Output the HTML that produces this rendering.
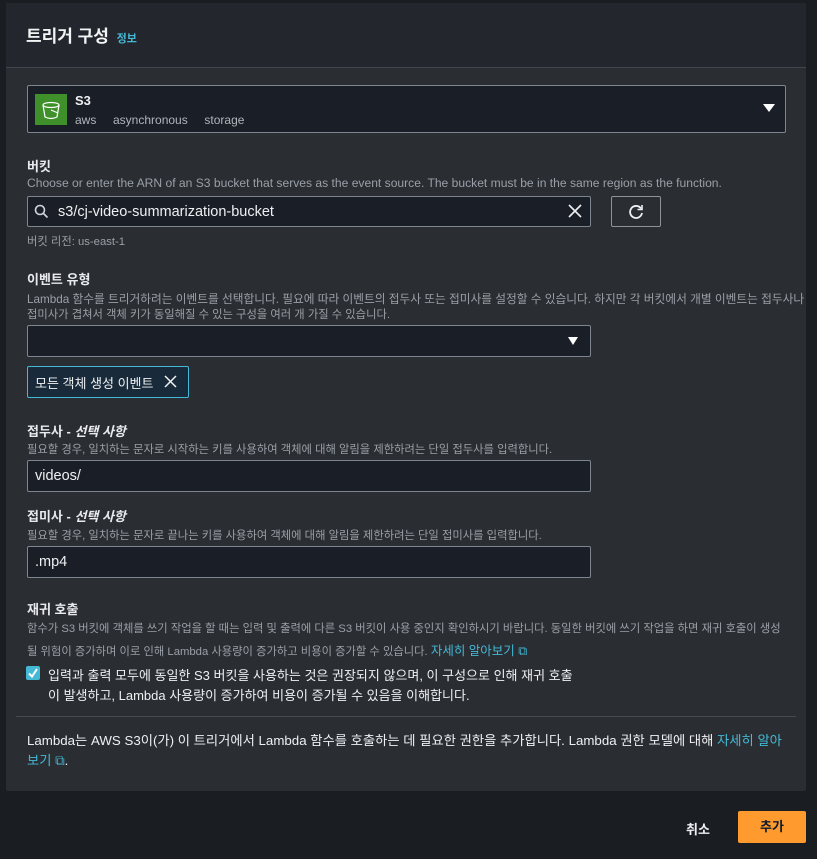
<!DOCTYPE html>
<html><head><meta charset="utf-8"><style>
*{box-sizing:border-box;margin:0;padding:0}
body{width:817px;height:859px;background:#1a1d22;font-family:"Liberation Sans","Noto Sans CJK KR",sans-serif;color:#d1d5db;position:relative;overflow:hidden}
.a{position:absolute;white-space:nowrap}
.card{position:absolute;left:6px;top:3px;width:800px;height:788px;background:#2a2d32;border-radius:2px}
.hdr{position:absolute;left:6px;top:3px;width:800px;height:65px;background:#23272d;border-bottom:1px solid #414750}
.lbl{font-size:13px;font-weight:bold;color:#e8eaed}
.desc{font-size:11.3px;color:#9aa0a8}
.inp{position:absolute;background:#1a1f27;border:1px solid #7d8590;border-radius:2px}
.val{font-size:14.5px;color:#eef0f2}
.link{color:#44b9d6}
</style></head><body>
<div class="card"></div>
<div class="hdr"></div>
<div class="a" style="left:26px;top:22px;font-size:17px;font-weight:bold;color:#f2f3f3">트리거 구성 <span style="font-size:11px;color:#44b9d6;margin-left:3px">정보</span></div>

<div class="inp" style="left:27px;top:85px;width:759px;height:48px"></div>
<div class="a" style="left:35px;top:94px;width:32px;height:31px;background:#3f8f2a"></div>
<svg class="a" style="left:38px;top:97px" width="26" height="26" viewBox="0 0 26 26" fill="none" stroke="#fff" stroke-width="1.2"><ellipse cx="13" cy="8" rx="8" ry="2.5"/><path d="M5 8 L7 20 Q13 23 19 20 L21 8"/><path d="M13 13 L20 16"/></svg>
<div class="a" style="left:75px;top:93px;font-size:13px;font-weight:bold;color:#eef0f2">S3</div>
<div class="a desc" style="left:75px;top:113px;font-size:12px;color:#b0b5bb">aws&nbsp;&nbsp;&nbsp;&nbsp;&nbsp;asynchronous&nbsp;&nbsp;&nbsp;&nbsp;&nbsp;storage</div>
<div class="a" style="left:763px;top:104px;border-left:6px solid transparent;border-right:6px solid transparent;border-top:8px solid #fff"></div>

<div class="a lbl" style="left:27px;top:156px">버킷</div>
<div class="a desc" style="left:27px;top:176px;font-size:12.1px">Choose or enter the ARN of an S3 bucket that serves as the event source. The bucket must be in the same region as the function.</div>
<div class="inp" style="left:27px;top:196px;width:564px;height:31px"></div>
<svg class="a" style="left:34px;top:204px" width="15" height="15" viewBox="0 0 15 15" fill="none" stroke="#d1d5db" stroke-width="1.6"><circle cx="6" cy="6" r="4.5"/><path d="M9.5 9.5 L13.5 13.5"/></svg>
<div class="a val" style="left:58px;top:204px">s3/cj-video-summarization-bucket</div>
<svg class="a" style="left:568px;top:204px" width="14" height="14" viewBox="0 0 14 14" stroke="#eef0f2" stroke-width="1.6"><path d="M1 1L13 13M13 1L1 13"/></svg>
<div class="a" style="left:611px;top:196px;width:50px;height:31px;border:1px solid #8d939b;border-radius:2px"></div>
<svg class="a" style="left:627px;top:203px" width="18" height="18" viewBox="0 0 18 18" fill="none" stroke="#eef0f2" stroke-width="1.8"><path d="M14 5.5 A6 6 0 1 0 15 10"/><path d="M15 2 L15 6.5 L10.5 6.5" stroke-width="1.6"/></svg>
<div class="a desc" style="left:27px;top:233px">버킷 리전: us-east-1</div>

<div class="a lbl" style="left:27px;top:269px">이벤트 유형</div>
<div class="a desc" style="left:27px;top:290px;font-size:11.7px">Lambda 함수를 트리거하려는 이벤트를 선택합니다. 필요에 따라 이벤트의 접두사 또는 접미사를 설정할 수 있습니다. 하지만 각 버킷에서 개별 이벤트는 접두사나</div>
<div class="a desc" style="left:27px;top:306px">접미사가 겹쳐서 객체 키가 동일해질 수 있는 구성을 여러 개 가질 수 있습니다.</div>
<div class="inp" style="left:27px;top:325px;width:564px;height:32px"></div>
<div class="a" style="left:568px;top:337px;border-left:5.5px solid transparent;border-right:5.5px solid transparent;border-top:8px solid #fff"></div>
<div class="a" style="left:27px;top:366px;width:162px;height:32px;background:#192b3b;border:1px solid #44b9d6;border-radius:2px"></div>
<div class="a" style="left:35px;top:373px;font-size:13px;color:#eef0f2">모든 객체 생성 이벤트</div>
<svg class="a" style="left:164px;top:375px" width="13" height="13" viewBox="0 0 13 13" stroke="#eef0f2" stroke-width="1.5"><path d="M1 1L12 12M12 1L1 12"/></svg>

<div class="a lbl" style="left:27px;top:421px">접두사 - <i>선택 사항</i></div>
<div class="a desc" style="left:27px;top:441px">필요할 경우, 일치하는 문자로 시작하는 키를 사용하여 객체에 대해 알림을 제한하려는 단일 접두사를 입력합니다.</div>
<div class="inp" style="left:27px;top:460px;width:564px;height:32px"></div>
<div class="a val" style="left:35px;top:468px">videos/</div>

<div class="a lbl" style="left:27px;top:506px">접미사 - <i>선택 사항</i></div>
<div class="a desc" style="left:27px;top:527px">필요할 경우, 일치하는 문자로 끝나는 키를 사용하여 객체에 대해 알림을 제한하려는 단일 접미사를 입력합니다.</div>
<div class="inp" style="left:27px;top:546px;width:564px;height:32px"></div>
<div class="a val" style="left:35px;top:554px">.mp4</div>

<div class="a lbl" style="left:27px;top:599px">재귀 호출</div>
<div class="a desc" style="left:27px;top:620px">함수가 S3 버킷에 객체를 쓰기 작업을 할 때는 입력 및 출력에 다른 S3 버킷이 사용 중인지 확인하시기 바랍니다. 동일한 버킷에 쓰기 작업을 하면 재귀 호출이 생성</div>
<div class="a desc" style="left:27px;top:640px">될 위험이 증가하며 이로 인해 Lambda 사용량이 증가하고 비용이 증가할 수 있습니다. <span class="link" style="font-size:12.5px">자세히 알아보기 ⧉</span></div>
<div class="a" style="left:26px;top:666px;width:14px;height:14px;background:#44b9d6;border-radius:2px"></div>
<svg class="a" style="left:27px;top:667px" width="12" height="12" viewBox="0 0 12 12" fill="none" stroke="#fff" stroke-width="2"><path d="M2 6.5 L5 9.5 L10 2"/></svg>
<div class="a" style="left:48px;top:665px;font-size:13px;color:#eef0f2">입력과 출력 모두에 동일한 S3 버킷을 사용하는 것은 권장되지 않으며, 이 구성으로 인해 재귀 호출</div>
<div class="a" style="left:48px;top:685px;font-size:13px;color:#eef0f2">이 발생하고, Lambda 사용량이 증가하여 비용이 증가될 수 있음을 이해합니다.</div>

<div class="a" style="left:16px;top:716px;width:780px;height:1px;background:#444a52"></div>
<div class="a" style="left:27px;top:730px;font-size:13.3px;color:#eef0f2">Lambda는 AWS S3이(가) 이 트리거에서 Lambda 함수를 호출하는 데 필요한 권한을 추가합니다. Lambda 권한 모델에 대해 <span class="link">자세히 알아</span></div>
<div class="a" style="left:27px;top:750px;font-size:13.3px;color:#eef0f2"><span class="link">보기 ⧉</span>.</div>

<div class="a" style="left:686px;top:819px;font-size:13px;font-weight:bold;color:#eef0f2">취소</div>
<div class="a" style="left:738px;top:811px;width:68px;height:32px;background:#ff9a2e;border-radius:2px;font-size:13px;font-weight:bold;color:#0f1b2a;text-align:center;line-height:32px">추가</div>
</body></html>
